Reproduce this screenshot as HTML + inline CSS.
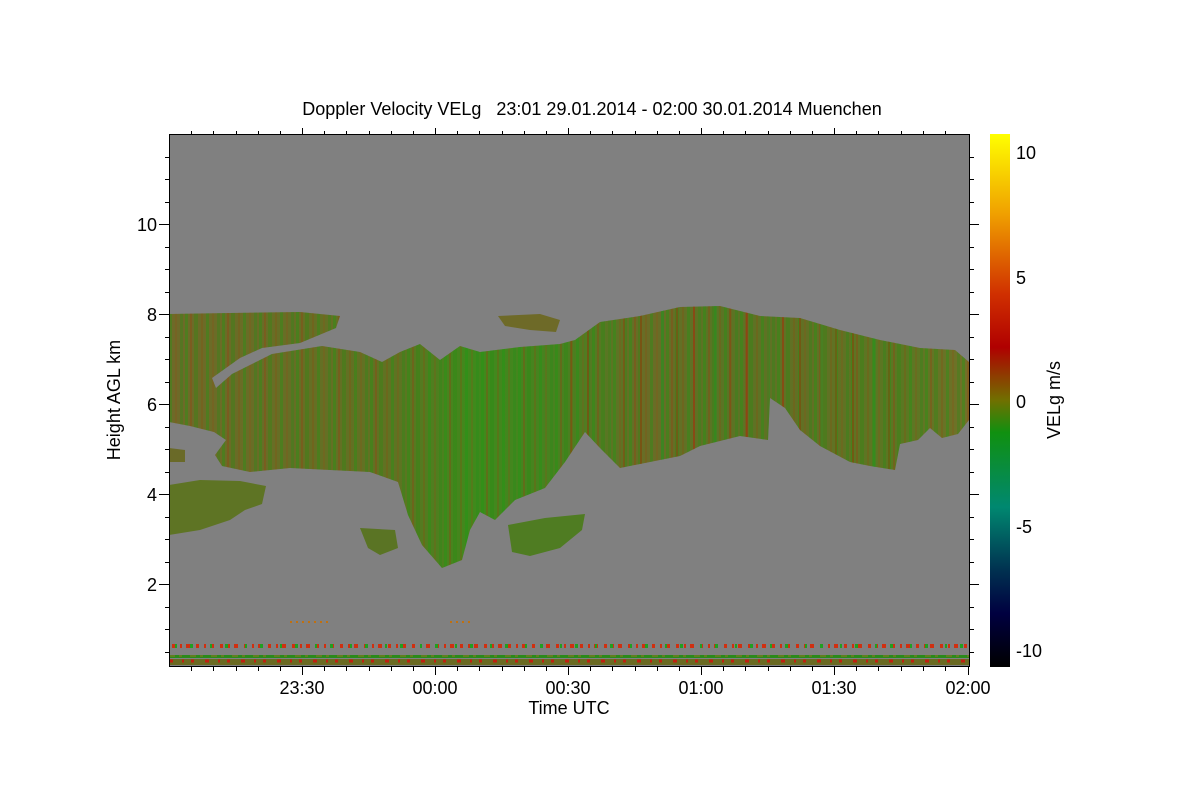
<!DOCTYPE html>
<html><head><meta charset="utf-8"><style>
body{margin:0;background:#fff;width:1200px;height:800px;overflow:hidden}
svg{display:block}
text{font-family:"Liberation Sans",sans-serif;fill:#000}
</style></head><body>
<svg width="1200" height="800" viewBox="0 0 1200 800" xmlns="http://www.w3.org/2000/svg">
<defs>
<linearGradient id="cb" x1="0" y1="0" x2="0" y2="1">
<stop offset="0" stop-color="#ffff00"/>
<stop offset="0.15" stop-color="#f0a000"/>
<stop offset="0.3" stop-color="#d03000"/>
<stop offset="0.4" stop-color="#b00000"/>
<stop offset="0.5" stop-color="#707000"/>
<stop offset="0.56" stop-color="#109010"/>
<stop offset="0.7" stop-color="#008870"/>
<stop offset="0.82" stop-color="#003050"/>
<stop offset="0.9" stop-color="#000040"/>
<stop offset="1" stop-color="#000000"/>
</linearGradient>
<linearGradient id="base" x1="169" y1="0" x2="969" y2="0" gradientUnits="userSpaceOnUse">
<stop offset="0" stop-color="#6e6a28"/>
<stop offset="0.28" stop-color="#607222"/>
<stop offset="0.38" stop-color="#3f8a1c"/>
<stop offset="0.5" stop-color="#4a8020"/>
<stop offset="0.6" stop-color="#6a6c26"/>
<stop offset="0.68" stop-color="#5a7424"/>
<stop offset="0.8" stop-color="#627024"/>
<stop offset="0.92" stop-color="#5a7822"/>
<stop offset="1" stop-color="#727028"/>
</linearGradient>
<pattern id="st" x="0" y="0" width="37" height="200" patternUnits="userSpaceOnUse">
<rect x="0" y="0" width="3" height="200" fill="#1a9a10" opacity="0.35"/>
<rect x="5" y="0" width="2" height="200" fill="#a03a10" opacity="0.3"/>
<rect x="9" y="0" width="4" height="200" fill="#209010" opacity="0.3"/>
<rect x="16" y="0" width="2" height="200" fill="#8a5010" opacity="0.3"/>
<rect x="21" y="0" width="3" height="200" fill="#10a010" opacity="0.3"/>
<rect x="27" y="0" width="2" height="200" fill="#905018" opacity="0.25"/>
<rect x="32" y="0" width="3" height="200" fill="#209018" opacity="0.3"/>
</pattern>
<pattern id="st2" x="0" y="0" width="53" height="300" patternUnits="userSpaceOnUse">
<rect x="4" y="0" width="2" height="300" fill="#c01000" opacity="0.35"/>
<rect x="25" y="0" width="3" height="300" fill="#10a020" opacity="0.3"/>
<rect x="40" y="0" width="2" height="300" fill="#b02000" opacity="0.3"/>
</pattern>
<path id="main" d="M169,314 L230,313 L300,312 L340,316 L336,328 L300,343 L262,348 L240,358 L212,378 L216,388 L232,374 L272,354 L322,346 L360,352 L382,362 L400,352 L420,344 L440,360 L460,346 L480,352 L520,347 L560,344 L575,340 L600,322 L640,316 L680,307 L720,306 L760,316 L800,318 L840,330 L880,340 L920,348 L955,350 L969,362 L969,420 L958,434 L942,438 L930,428 L918,440 L900,444 L895,470 L870,466 L850,462 L820,446 L800,430 L785,408 L770,398 L768,440 L740,436 L700,446 L680,456 L650,462 L620,468 L610,458 L600,448 L585,432 L565,462 L545,488 L515,500 L495,520 L480,512 L470,530 L462,560 L442,568 L422,545 L408,515 L398,482 L370,472 L330,470 L290,468 L250,472 L222,466 L215,455 L226,440 L214,432 L190,426 L169,422 Z"/>
<clipPath id="mc"><use href="#main"/></clipPath>
</defs>
<text x="592" y="115" font-size="18" text-anchor="middle" style="white-space:pre">Doppler Velocity VELg   23:01 29.01.2014 - 02:00 30.01.2014 Muenchen</text>
<rect x="169" y="135" width="800" height="532" fill="#808080"/>
<use href="#main" fill="url(#base)"/>
<path d="M169,485 L200,480 L240,481 L266,486 L262,504 L245,510 L230,520 L200,530 L169,535 Z" fill="#5e7424"/>
<path d="M169,448 L185,450 L185,462 L169,462 Z" fill="#6a6a28"/>
<path d="M360,528 L395,530 L398,548 L380,555 L368,548 Z" fill="#5a7424"/>
<path d="M508,525 L545,518 L585,514 L582,530 L560,548 L530,556 L512,552 Z" fill="#4f7c22"/>
<path d="M498,316 L540,314 L560,320 L556,332 L530,330 L505,326 Z" fill="#6e6a28"/>
<use href="#main" fill="url(#st)"/>
<g clip-path="url(#mc)"><rect x="560" y="300" width="330" height="180" fill="url(#st2)"/></g>
<!-- bottom noise -->
<line x1="172" y1="646" x2="969" y2="646" stroke="#d03010" stroke-width="4" stroke-dasharray="3 5 2 4 4 6" />
<line x1="175" y1="646" x2="969" y2="646" stroke="#20a020" stroke-width="4" stroke-dasharray="2 13 3 17" />
<rect x="169" y="655" width="800" height="3" fill="#2a8a1a"/>
<rect x="169" y="659" width="800" height="6" fill="#6a6a22"/>
<line x1="169" y1="661" x2="969" y2="661" stroke="#c02010" stroke-width="3" stroke-dasharray="4 9 2 7 3 11"/>
<line x1="169" y1="656" x2="969" y2="656" stroke="#608020" stroke-width="2" stroke-dasharray="6 4 3 8"/>
<line x1="290" y1="622" x2="330" y2="622" stroke="#c07010" stroke-width="2" stroke-dasharray="2 4"/>
<line x1="450" y1="622" x2="470" y2="622" stroke="#c07010" stroke-width="2" stroke-dasharray="2 4"/>
<!-- frame -->
<rect x="169.5" y="134.5" width="800" height="532" fill="none" stroke="#000" stroke-width="1"/>
<g stroke="#000" stroke-width="1">
<path d="M302.5,667v8M435.5,667v8M568.5,667v8M701.5,667v8M834.5,667v8M968.5,667v8M302.5,135v-7M435.5,135v-7M568.5,135v-7M701.5,135v-7M834.5,135v-7
M191.5,667v4M213.5,667v4M236.5,667v4M258.5,667v4M280.5,667v4M324.5,667v4M346.5,667v4M369.5,667v4M391.5,667v4M413.5,667v4M457.5,667v4M479.5,667v4M502.5,667v4M524.5,667v4M546.5,667v4M590.5,667v4M612.5,667v4M635.5,667v4M657.5,667v4M679.5,667v4M723.5,667v4M745.5,667v4M768.5,667v4M790.5,667v4M812.5,667v4M856.5,667v4M878.5,667v4M901.5,667v4M923.5,667v4M945.5,667v4
M191.5,135v-4M213.5,135v-4M236.5,135v-4M258.5,135v-4M280.5,135v-4M324.5,135v-4M346.5,135v-4M369.5,135v-4M391.5,135v-4M413.5,135v-4M457.5,135v-4M479.5,135v-4M502.5,135v-4M524.5,135v-4M546.5,135v-4M590.5,135v-4M612.5,135v-4M635.5,135v-4M657.5,135v-4M679.5,135v-4M723.5,135v-4M745.5,135v-4M768.5,135v-4M790.5,135v-4M812.5,135v-4M856.5,135v-4M878.5,135v-4M901.5,135v-4M923.5,135v-4M945.5,135v-4
M169,224.5h-10M169,314.5h-10M169,404.5h-10M169,494.5h-10M169,584.5h-10M970,224.5h9M970,314.5h9M970,404.5h9M970,494.5h9M970,584.5h9
M169,157.5h-4M169,179.5h-4M169,202.5h-4M169,247.5h-4M169,269.5h-4M169,292.5h-4M169,337.5h-4M169,359.5h-4M169,382.5h-4M169,427.5h-4M169,449.5h-4M169,472.5h-4M169,517.5h-4M169,539.5h-4M169,562.5h-4M169,607.5h-4M169,629.5h-4M169,652.5h-4
M970,157.5h4M970,179.5h4M970,202.5h4M970,247.5h4M970,269.5h4M970,292.5h4M970,337.5h4M970,359.5h4M970,382.5h4M970,427.5h4M970,449.5h4M970,472.5h4M970,517.5h4M970,539.5h4M970,562.5h4M970,607.5h4M970,629.5h4M970,652.5h4"/>
</g>
<g font-size="18" text-anchor="end">
<text x="157" y="231">10</text><text x="157" y="321">8</text><text x="157" y="411">6</text><text x="157" y="501">4</text><text x="157" y="591">2</text>
</g>
<g font-size="18" text-anchor="middle">
<text x="302" y="694">23:30</text><text x="435" y="694">00:00</text><text x="568" y="694">00:30</text><text x="701" y="694">01:00</text><text x="834" y="694">01:30</text><text x="968" y="694">02:00</text>
<text x="569" y="714">Time UTC</text>
</g>
<text x="120" y="400" font-size="18" text-anchor="middle" transform="rotate(-90 120 400)">Height AGL km</text>
<rect x="990" y="134" width="20" height="533" fill="url(#cb)"/>
<g font-size="18">
<text x="1016" y="159">10</text><text x="1016" y="284">5</text><text x="1016" y="408">0</text><text x="1016" y="533">-5</text><text x="1016" y="657">-10</text>
</g>
<text x="1060" y="400" font-size="18" text-anchor="middle" transform="rotate(-90 1060 400)">VELg m/s</text>
</svg>
</body></html>
